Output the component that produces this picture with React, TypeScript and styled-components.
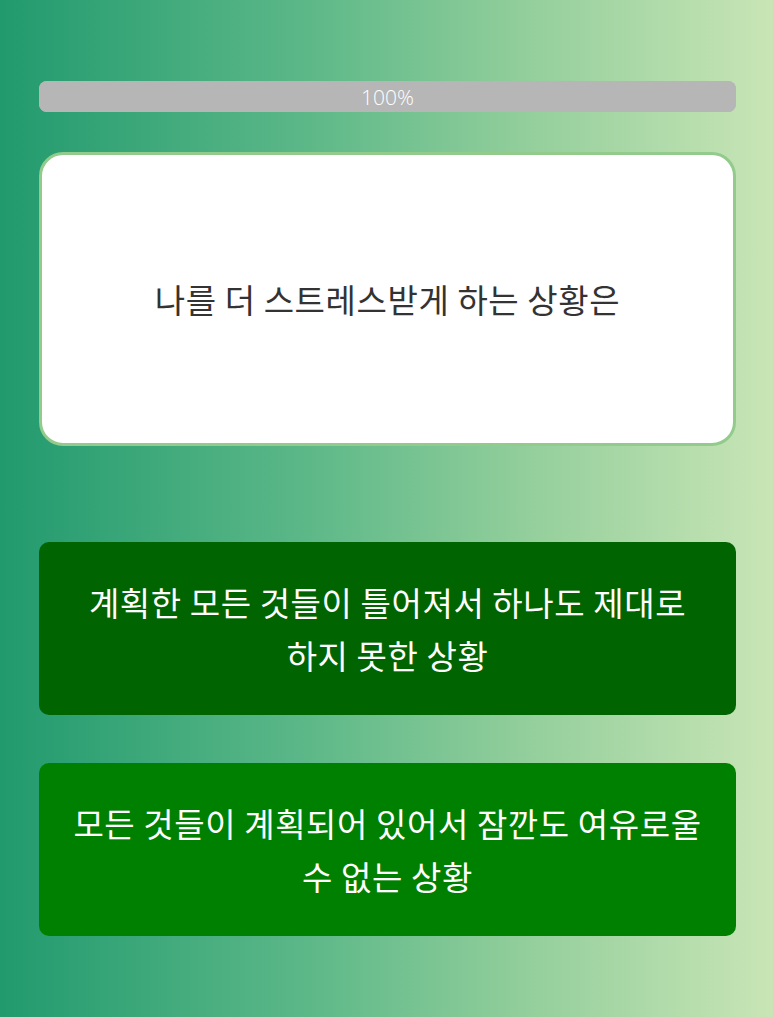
import styled, { createGlobalStyle } from 'styled-components';

const GlobalStyle = createGlobalStyle`
  html, body {
    margin: 0;
    padding: 0;
  }
  body {
    font-family: "Noto Sans CJK KR", "Noto Sans", sans-serif;
    word-break: keep-all;
  }
`;

const options = [
  { text: '계획한 모든 것들이 틀어져서 하나도 제대로 하지 못한 상황', tone: 'dark' as const },
  { text: '모든 것들이 계획되어 있어서 잠깐도 여유로울 수 없는 상황', tone: 'light' as const },
];

export default function App() {
  return (
    <>
      <GlobalStyle />
      <Page>
        <Content>
          <ProgressBar>
            <ProgressFill style={{ width: '100%' }} />
            <ProgressLabel>100%</ProgressLabel>
          </ProgressBar>
          <QuestionCard>
            <QuestionText>나를 더 스트레스받게 하는 상황은</QuestionText>
          </QuestionCard>
          <Options>
            {options.map((o) => (
              <OptionButton key={o.text} $tone={o.tone}>
                {o.text}
              </OptionButton>
            ))}
          </Options>
        </Content>
      </Page>
    </>
  );
}

const Page = styled.div`
  min-height: 1017px;
  background: linear-gradient(to right, #219a6e 0%, #5db888 40%, #96d09d 70%, #c9e5b6 100%);
`;

const Content = styled.div`
  width: 697px;
  margin: 0 0 0 39px;
  padding-top: 81px;
  display: flex;
  flex-direction: column;
`;

const ProgressBar = styled.div`
  position: relative;
  height: 31px;
  border-radius: 8px;
  background-color: #b6b6b6;
  overflow: hidden;
  display: flex;
  align-items: center;
  justify-content: center;
`;

const ProgressFill = styled.div`
  position: absolute;
  left: 0;
  top: 0;
  bottom: 0;
  background-color: #b6b6b6;
`;

const ProgressLabel = styled.span`
  position: relative;
  color: #fff;
  font-family: "Open Sans", "Noto Sans", sans-serif;
  font-weight: 300;
  font-size: 21px;
`;

const QuestionCard = styled.div`
  margin-top: 40px;
  height: 294px;
  box-sizing: border-box;
  background: #fff;
  border: 3px solid #92cb8c;
  border-radius: 24px;
  display: flex;
  align-items: center;
  justify-content: center;
`;

const QuestionText = styled.p`
  margin: 0;
  color: #333;
  font-size: 33px;
  letter-spacing: 0.6px;
  text-align: center;
`;

const Options = styled.div`
  margin-top: 96px;
  display: flex;
  flex-direction: column;
  gap: 48px;
`;

const OptionButton = styled.div<{ $tone: 'dark' | 'light' }>`
  height: 173px;
  box-sizing: border-box;
  padding: 0 28px;
  border-radius: 10px;
  background-color: ${(p) => (p.$tone === 'dark' ? '#006400' : '#008000')};
  color: #fff;
  font-size: 33px;
  letter-spacing: 0.6px;
  line-height: 53px;
  text-align: center;
  display: flex;
  align-items: center;
  justify-content: center;
`;
